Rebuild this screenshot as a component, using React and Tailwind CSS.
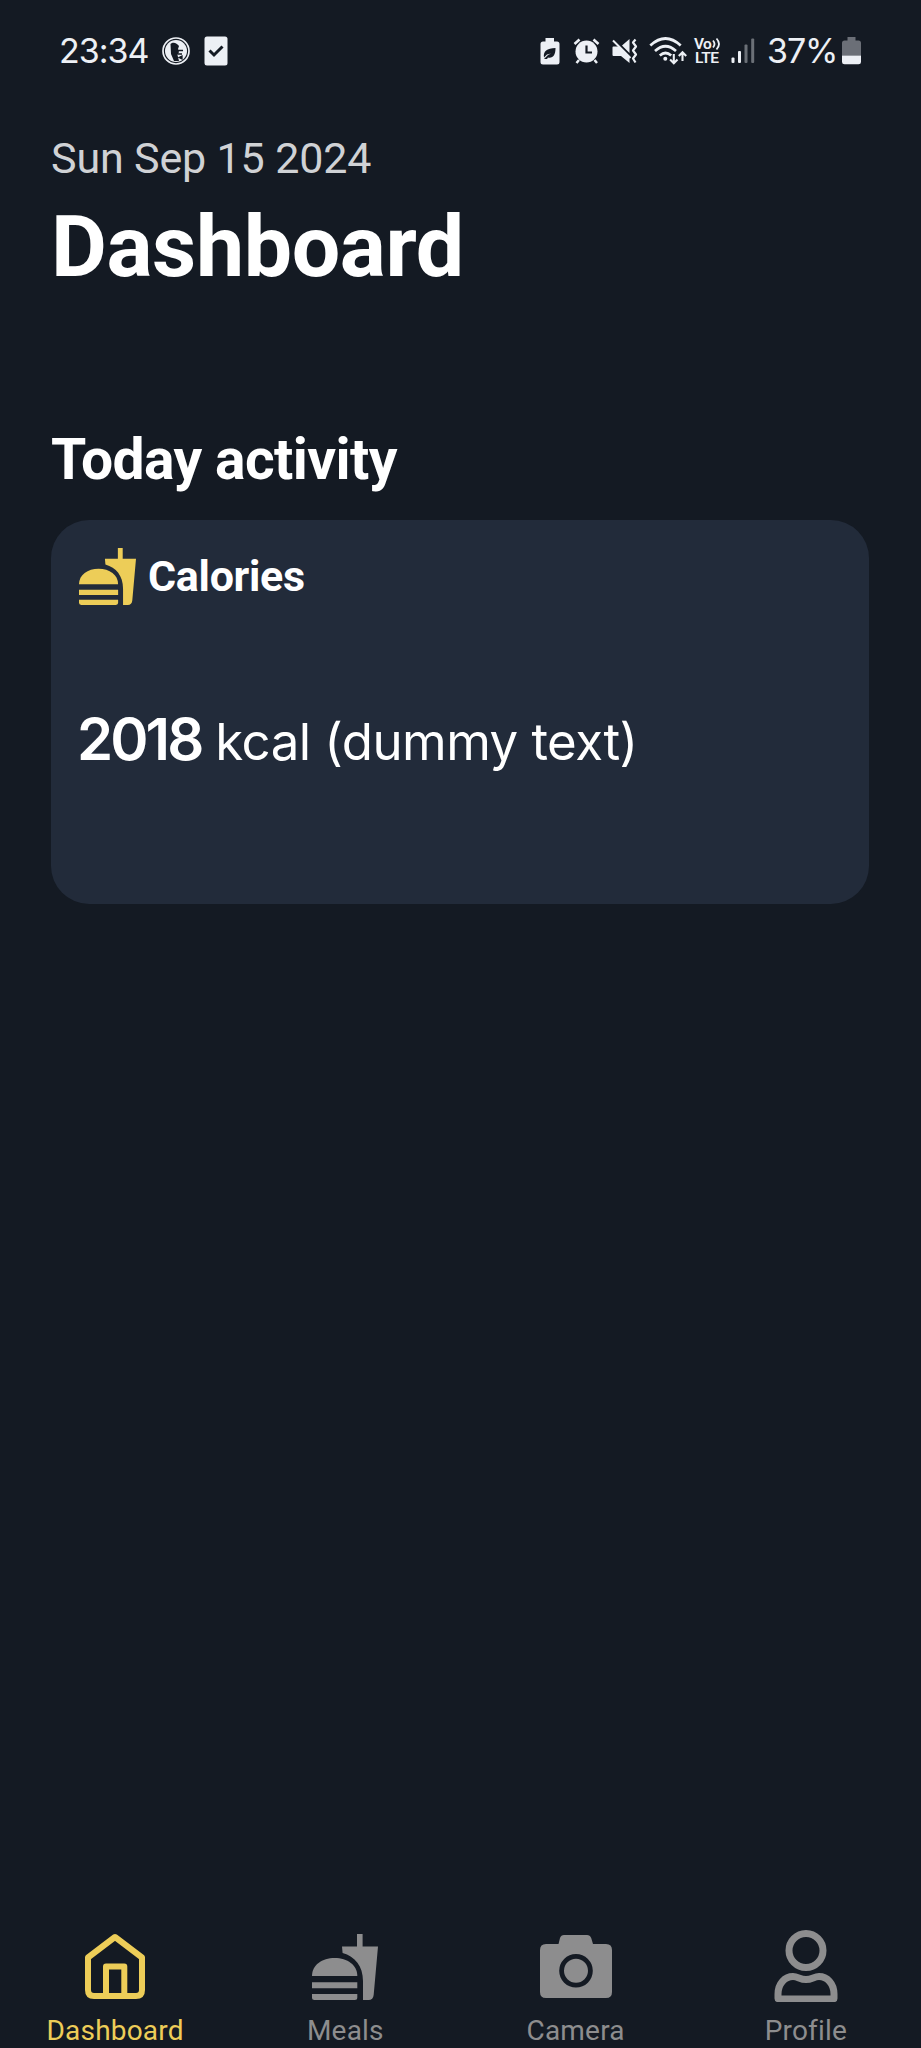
const FastFood = ({ className }) => (
  <svg viewBox="0 0 66 66" className={className} fill="currentColor">
    <path d="M45 0h5.6v12.5H66l-4.3 48.3Q61.2 66 56.5 66H51V47C51 32 43 22.500 30.600 19L30 12.500H45Z" />
    <path d="M0 42C0 31 10 24 22.700 24S45.300 31 45.300 42Z" />
    <path d="M0 48.300h45.300v6H0ZM0 60h45.300v3.500q0 2.500-2.500 2.500H2.500Q0 66 0 63.500Z" />
  </svg>
);

const Home = () => (
  <svg viewBox="0 0 72 72" className="h-[72px] w-[72px]" fill="none" stroke="currentColor" strokeWidth="6" strokeLinejoin="round">
    <path d="M9 27.500 36 7 63 27.500V60Q63 66 57 66H15Q9 66 9 60Z" />
    <path d="M27 66V36.500H45.300V66" />
  </svg>
);

const Camera = () => (
  <svg viewBox="0 0 72 72" className="h-[72px] w-[72px]" fill="currentColor">
    <path
      fillRule="evenodd"
      d="M24 5H47Q50 5 51.200 8L53 14H66Q72 14 72 20V62Q72 68 66 68H6Q0 68 0 62V20Q0 14 6 14H18.500L20 8Q21 5 24 5ZM36 24a16.800 16.800 0 1 0 0 33.600a16.800 16.800 0 1 0 0-33.600ZM36 28.800a12 12 0 1 1 0 24a12 12 0 1 1 0-24Z"
    />
  </svg>
);

const Person = () => (
  <svg viewBox="0 0 72 72" className="h-[72px] w-[72px]" fill="none" stroke="currentColor" strokeWidth="7" strokeLinejoin="round">
    <circle cx="36" cy="20.500" r="17" />
    <path d="M8 68.500V64C8 53.500 15 46.500 23 46.500C28 46.500 30 49.500 36 49.500S44 46.500 49 46.500C57 46.500 64 53.500 64 64V68.500Q64 69 62 69H10Q8 69 8 68.500Z" />
  </svg>
);

const StatusBar = () => (
  <header className="flex h-[102px] items-center pl-[59px] font-[Inter,sans-serif] text-[34px] leading-10 text-[#edf0f5]">
    <span className="w-[103px] tracking-[-1px]">23:34</span>
    <svg viewBox="0 0 28 28" className="h-7 w-7">
      <circle cx="14" cy="14" r="13" fill="none" stroke="currentColor" strokeWidth="1.700" />
      <circle cx="14" cy="14" r="11" fill="currentColor" />
      <path d="M8.500 7C11 4.500 15 6 17 9L16 12 17 15 15.500 18 17 24 12 24 9 17Z" fill="#141a23" />
      <path d="M16 13.500h5M16 17h4M17 20.500l3 1.500v-3Z" stroke="#141a23" strokeWidth="1.300" fill="#141a23" />
    </svg>
    <svg viewBox="0 0 24 30" className="ml-[14px] h-[30px] w-6">
      <rect x=".5" y=".5" width="23" height="29" rx="2.500" fill="currentColor" />
      <path d="m5.500 14.500 4.500 4.500 8.500-8.500" fill="none" stroke="#141a23" strokeWidth="3" />
    </svg>
    <svg viewBox="541 31 20 40" className="ml-[312px] h-10 w-5">
      <path d="M546.500 38h8.500v3.500h3q2.500 0 2.500 2.500v18q0 2.500-2.500 2.500h-14q-2.500 0-2.500-2.500v-18q0-2.500 2.500-2.500h2.500Z" fill="currentColor" />
      <path d="M545 57.500c-1-6 3-9.500 11.500-9.500c0 7-2.500 10.500-7.500 9.500l-1 1.500h-3l4-4 3-1.500-4 1Z" fill="#141a23" />
    </svg>
    <svg viewBox="574 31 28 40" className="ml-[13px] h-10 w-7" fill="none" stroke="currentColor">
      <circle cx="587.500" cy="51.500" r="11" fill="currentColor" stroke="none" />
      <path d="m575.500 44 5-4.500m19 4.500-5-4.500" strokeWidth="2.600" />
      <path d="m580 60-2.500 3m18-3 2.500 3" strokeWidth="2.500" />
      <path d="M587.500 45.500v7h5.500" stroke="#141a23" strokeWidth="2.200" />
    </svg>
    <svg viewBox="612 31 27 40" className="ml-[10px] h-10 w-[27px]" fill="currentColor">
      <path d="M613.500 46.500h6l5 5 6 6V63l-8.500-7h-7.500q-1 0-1-1v-7.500q0-1 1-1ZM630.500 39v14L623 45.500Z" />
      <path d="m614 40.500 17.500 17.500" stroke="currentColor" strokeWidth="2" />
      <path d="M636.500 39.500l-2.500 3 3 4-3 4 3 4-3 4 2.500 4" fill="none" stroke="currentColor" strokeWidth="2.200" strokeLinejoin="round" />
    </svg>
    <svg viewBox="650 31 38 40" className="ml-[11px] h-10 w-[38px]" fill="none" stroke="currentColor" strokeWidth="2.700">
      <path d="M651.300 45.500q15.200-14 30.400 0M656 51q10.500-9.500 21 0M660.800 55.500q5.700-5 11.400 0" />
      <circle cx="666.300" cy="58.800" r="2" fill="currentColor" stroke="none" />
      <path d="M674.800 54v9m-3.700-3.500 3.700 3.700 3.700-3.700M683.500 61v-8.500m-3.700 3.500 3.700-3.700 3.700 3.700" strokeWidth="2.100" />
    </svg>
    <span className="ml-[7px] flex w-[28px] flex-col font-[Roboto,sans-serif] text-[15.500px] font-semibold leading-[14px]">
      <span className="flex items-center whitespace-nowrap tracking-[-0.8px]">
        Vo
        <svg viewBox="0 0 9 14" className="ml-px h-[14px] w-[9px] shrink-0" fill="none" stroke="currentColor" strokeWidth="1.800">
          <path d="M1 3.500q3 3.500 0 7M4.500 1.500q5 5.500 0 11" />
        </svg>
      </span>
      <span className="pl-px tracking-[-0.4px]">LTE</span>
    </span>
    <svg viewBox="732 31 24 40" className="ml-[9px] h-10 w-6" fill="currentColor">
      <rect x="732.500" y="57.500" width="3" height="5.500" rx="1" />
      <rect x="739" y="51" width="3" height="12" rx="1" />
      <g opacity=".4">
        <rect x="745.500" y="44.500" width="3" height="18.500" rx="1" />
        <rect x="752.200" y="38.500" width="3" height="24.500" rx="1" />
      </g>
    </svg>
    <span className="ml-[12px] w-[75px] tracking-[-1.1px]">37%</span>
    <svg viewBox="843 31 19 40" className="h-10 w-[19px]" fill="currentColor">
      <path opacity=".4" d="M848.500 37h8v3.500h3q2.500 0 2.500 2.500v12.500h-19V43q0-2.500 2.500-2.500h3Z" />
      <path d="M843 55.500h19V62q0 2.300-2.500 2.300h-14Q843 64.300 843 62Z" />
    </svg>
  </header>
);

const Tab = ({ label, active, children }) => (
  <a className={`flex flex-1 flex-col items-center ${active ? "text-[#edcd58]" : "text-[#8d8d8e]"}`}>
    {children}
    <span className="mt-[13px] text-[28px] leading-8 tracking-[0.2px]">{label}</span>
  </a>
);

export default function App() {
  return (
    <div className="flex h-[2048px] w-[921px] flex-col overflow-hidden bg-[#141a23] font-[Roboto,sans-serif] text-white">
      <StatusBar />
      <main className="flex-1 px-[51px] pt-[31px]">
        <p className="text-[43px] leading-[50px] tracking-[-0.15px] text-[#d0d2d5]">Sun Sep 15 2024</p>
        <h1 className="mt-[14px] text-[86px] font-bold leading-[100px] tracking-[-0.4px]">Dashboard</h1>
        <h2 className="mt-[130px] text-[57px] font-bold leading-[66px] tracking-[-0.6px]">Today activity</h2>
        <section className="mt-[27px] h-[384px] w-[818px] rounded-[38px] bg-[#222b3a] px-[27px] pt-[28px]">
          <div className="flex items-start pl-px">
            <FastFood className="h-[57px] w-[57px] text-[#edcd58]" />
            <h3 className="ml-[12px] mt-px text-[43px] font-bold leading-[54px] tracking-[-0.3px]">Calories</h3>
          </div>
          <p className="-ml-px mt-[98px] whitespace-nowrap font-[Inter,sans-serif] text-[51px] leading-[72px] tracking-[-0.55px]">
            <strong className="text-[58px] font-semibold tracking-[-2.900px]">2018</strong> kcal (dummy text)
          </p>
        </section>
      </main>
      <nav className="flex h-[118px]">
        <Tab label="Dashboard" active><Home /></Tab>
        <Tab label="Meals"><FastFood className="mb-[2px] mt-[4px] h-[66px] w-[66px]" /></Tab>
        <Tab label="Camera"><Camera /></Tab>
        <Tab label="Profile"><Person /></Tab>
      </nav>
    </div>
  );
}
